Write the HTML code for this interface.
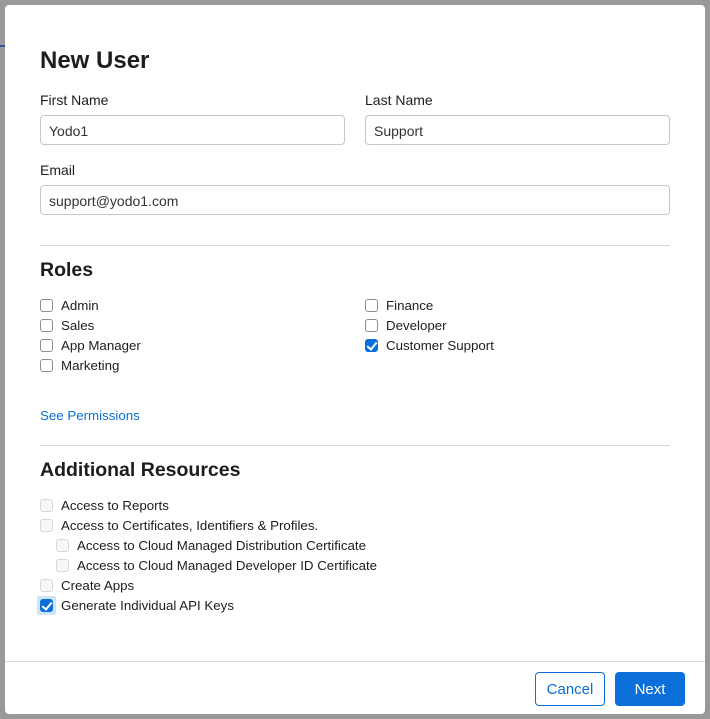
<!DOCTYPE html>
<html><head><style>
*{box-sizing:border-box;margin:0;padding:0}
body{width:710px;height:719px;background:#999;font-family:"Liberation Sans",sans-serif;color:#1d1d1f;position:relative;overflow:hidden}
.m{position:absolute;left:5px;top:5px;width:700px;height:709px;background:#fff;border-radius:4px}
.a{position:absolute;white-space:nowrap}
h1{position:absolute;left:35px;top:42px;font-size:24px;font-weight:bold}
h2{position:absolute;left:35px;font-size:19.5px;font-weight:bold}
.l{font-size:14px;color:#1d1d1f}
.in{position:absolute;height:30px;border:1px solid #c7c7c7;border-radius:4px;font-size:14px;padding:7px 8px;color:#333}
.hr{position:absolute;left:35px;width:630px;height:1px;background:#d6d6d6}
.cb{position:absolute;width:13px;height:13px;border:1px solid #8e8e8e;border-radius:3px;background:#fff}
.cb.d{border-color:#d8d8d8;background:#f7f7f7}
.cb.c{background:#0a6fd8;border-color:#0a6fd8}
.cb.c:after{content:"";position:absolute;left:3px;top:0px;width:4px;height:8px;border:solid #fff;border-width:0 2px 2px 0;transform:rotate(40deg)}
.t{position:absolute;font-size:13.3px;white-space:nowrap;margin-top:1px}
.btn{position:absolute;top:667px;height:34px;width:70px;border-radius:4px;font-size:15px;text-align:center}
.btn span{position:absolute;left:0;right:0;top:9px;line-height:17px}
</style></head><body>
<div style="position:absolute;left:0;top:45px;width:5px;height:2px;background:#2a5c9a"></div>
<div class="m">
<h1>New User</h1>
<div class="a l" style="left:35px;top:87px">First Name</div>
<div class="a l" style="left:360px;top:87px">Last Name</div>
<div class="in" style="left:35px;top:110px;width:305px">Yodo1</div>
<div class="in" style="left:360px;top:110px;width:305px">Support</div>
<div class="a l" style="left:35px;top:157px">Email</div>
<div class="in" style="left:35px;top:180px;width:630px">support@yodo1.com</div>
<div class="hr" style="top:240px"></div>
<h2 style="top:254px">Roles</h2>
<div class="cb" style="left:35px;top:294px"></div><div class="t" style="left:56px;top:292px">Admin</div>
<div class="cb" style="left:35px;top:314px"></div><div class="t" style="left:56px;top:312px">Sales</div>
<div class="cb" style="left:35px;top:334px"></div><div class="t" style="left:56px;top:332px">App Manager</div>
<div class="cb" style="left:35px;top:354px"></div><div class="t" style="left:56px;top:352px">Marketing</div>
<div class="cb" style="left:360px;top:294px"></div><div class="t" style="left:381px;top:292px">Finance</div>
<div class="cb" style="left:360px;top:314px"></div><div class="t" style="left:381px;top:312px">Developer</div>
<div class="cb c" style="left:360px;top:334px"></div><div class="t" style="left:381px;top:332px">Customer Support</div>
<div class="t" style="left:35px;top:402px;color:#0a6fd8">See Permissions</div>
<div class="hr" style="top:440px"></div>
<h2 style="top:454px">Additional Resources</h2>
<div class="cb d" style="left:35px;top:494px"></div><div class="t" style="left:56px;top:492px">Access to Reports</div>
<div class="cb d" style="left:35px;top:514px"></div><div class="t" style="left:56px;top:512px">Access to Certificates, Identifiers &amp; Profiles.</div>
<div class="cb d" style="left:51px;top:534px"></div><div class="t" style="left:72px;top:532px">Access to Cloud Managed Distribution Certificate</div>
<div class="cb d" style="left:51px;top:554px"></div><div class="t" style="left:72px;top:552px">Access to Cloud Managed Developer ID Certificate</div>
<div class="cb d" style="left:35px;top:574px"></div><div class="t" style="left:56px;top:572px">Create Apps</div>
<div style="position:absolute;left:32px;top:591px;width:19px;height:19px;background:#cfe3fb;border-radius:2px"></div>
<div class="cb c" style="left:35px;top:594px"></div><div class="t" style="left:56px;top:592px">Generate Individual API Keys</div>
<div style="position:absolute;left:0;top:656px;width:700px;height:1px;background:#d6d6d6"></div>
<div class="btn" style="left:530px;border:1px solid #0a6fd8;color:#0a6fd8"><span style="top:8px">Cancel</span></div>
<div class="btn" style="left:610px;background:#0a6fd8;color:#fff"><span>Next</span></div>
</div>
</body></html>
